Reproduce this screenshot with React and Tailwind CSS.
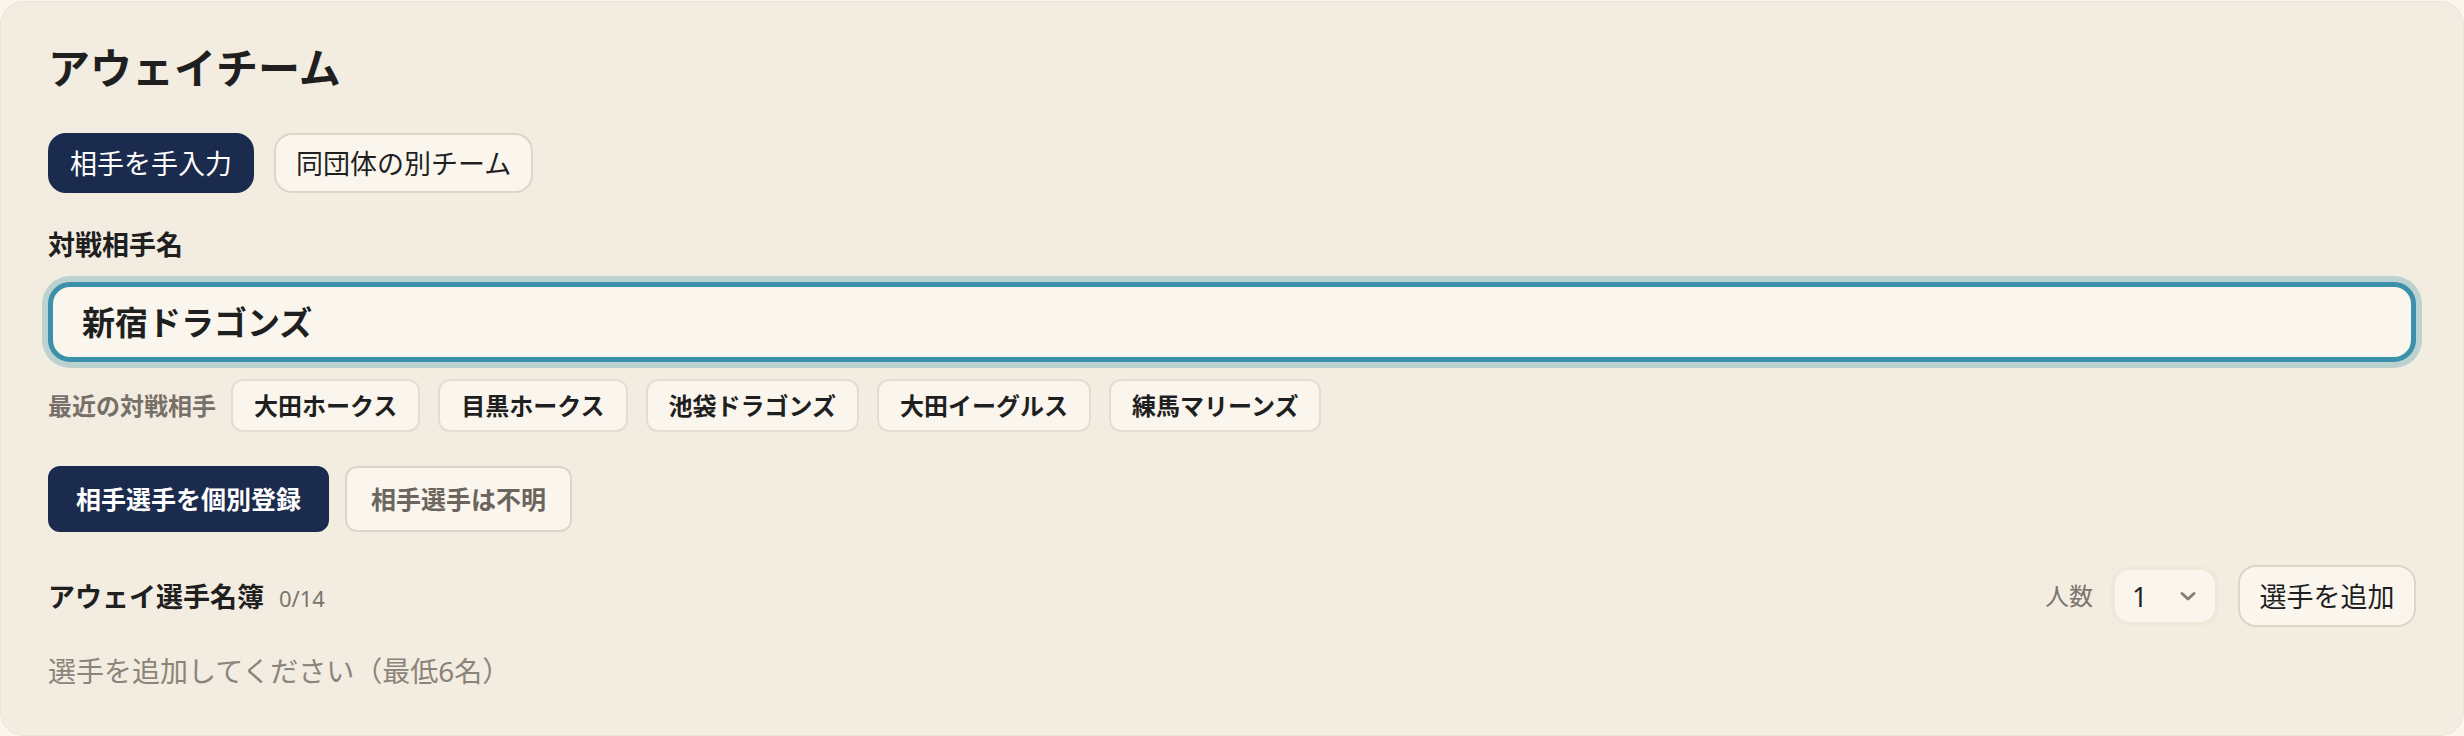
import React from "react";

const FONT = { fontFamily: '"Noto Sans", "Noto Sans CJK JP", sans-serif' };

export default function App() {
  const recent = ["大田ホークス", "目黒ホークス", "池袋ドラゴンズ", "大田イーグルス", "練馬マリーンズ"];
  return (
    <div className="w-[2464px] h-[736px] bg-[#faf6ee] pt-px" style={FONT}>
      <div className="h-[735px] rounded-[24px] border border-[#ebe4d6] bg-[#f3ece0] px-[47px] pt-[38px] flex flex-col text-[#1f1f1f]">
        <h1 className="text-[42px] leading-[56px] font-semibold tracking-normal">アウェイチーム</h1>

        <div className="mt-[37px] flex gap-[20px]">
          <button className="h-[60px] px-[20px] rounded-[18px] bg-[#1b2b4d] text-white text-[27px] leading-none border-2 border-[#1b2b4d]">
            相手を手入力
          </button>
          <button className="h-[60px] px-[20px] rounded-[18px] bg-[#faf6ed] text-[#1f1f1f] text-[27px] leading-none border-2 border-[#ddd6c8]">
            同団体の別チーム
          </button>
        </div>

        <label className="mt-[34px] text-[27px] leading-[36px] font-bold">対戦相手名</label>

        <div className="mt-[19px] h-[80px] rounded-[22px] border-[5px] border-[#3b91aa] bg-[#faf6ed] shadow-[0_0_0_6px_#bcd2d1] flex items-center px-[29px]">
          <span className="text-[33px] leading-none font-semibold">新宿ドラゴンズ</span>
        </div>

        <div className="mt-[17px] flex items-center">
          <span className="text-[24px] leading-none font-semibold text-[#777069] mr-[15px]">最近の対戦相手</span>
          <div className="flex gap-[18px]">
            {recent.map((r) => (
              <button
                key={r}
                className="h-[53px] px-[21px] rounded-[12px] border-2 border-[#e4ded2] bg-[#faf6ed] text-[24px] leading-none font-bold text-[#1f1f1f]"
              >
                {r}
              </button>
            ))}
          </div>
        </div>

        <div className="mt-[34px] flex gap-[16px]">
          <button className="h-[66px] px-[26px] rounded-[12px] border-2 border-[#1b2b4d] bg-[#1b2b4d] text-white text-[25px] leading-none font-bold">
            相手選手を個別登録
          </button>
          <button className="h-[66px] px-[24px] rounded-[12px] border-2 border-[#ddd6c8] bg-[#faf6ed] text-[#6b655e] text-[25px] leading-none font-semibold">
            相手選手は不明
          </button>
        </div>

        <div className="mt-[33px] flex items-center justify-between">
          <div className="flex items-baseline gap-[15px]">
            <span className="text-[27px] leading-none font-bold">アウェイ選手名簿</span>
            <span className="text-[22px] leading-none text-[#7a746c]">0/14</span>
          </div>
          <div className="flex items-center">
            <span className="text-[24px] leading-none text-[#7a746c] mr-[22px]">人数</span>
            <div className="h-[52px] w-[100px] rounded-[15px] bg-[#faf6ed] shadow-[0_0_0_4px_#efe8db] flex items-center justify-between pl-[17px] pr-[18px]">
              <span className="text-[27px] leading-none text-[#1f1f1f]">1</span>
              <svg width="18" height="12" viewBox="0 0 18 12" fill="none">
                <path d="M3 3.5 L9 9 L15 3.5" stroke="#857e75" strokeWidth="3" strokeLinecap="round" strokeLinejoin="round" />
              </svg>
            </div>
            <button className="ml-[23px] h-[62px] w-[178px] rounded-[18px] border-2 border-[#ddd6c8] bg-[#faf6ed] text-[27px] leading-none text-[#1f1f1f]">
              選手を追加
            </button>
          </div>
        </div>

        <p className="mt-[26px] text-[28px] leading-[36px] text-[#8b847b]">選手を追加してください（最低6名）</p>
      </div>
    </div>
  );
}
